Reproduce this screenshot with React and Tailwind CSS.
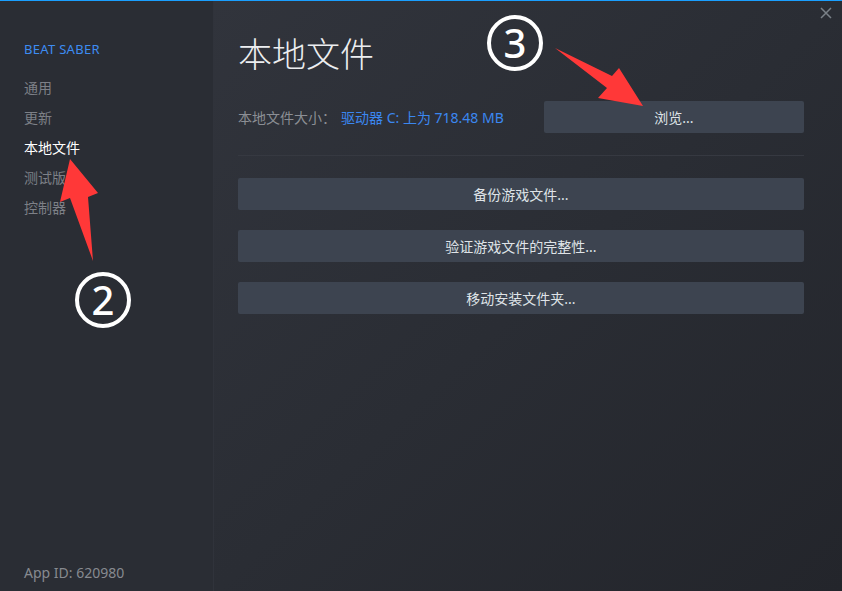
import React from "react";

const navItems = ["通用", "更新", "本地文件", "测试版", "控制器"];
const actions = ["备份游戏文件...", "验证游戏文件的完整性...", "移动安装文件夹..."];

function Circled({ n, className }) {
  return (
    <div
      className={`absolute w-[56px] h-[56px] rounded-full border-[4px] border-white flex items-center justify-center text-white text-[40px] font-medium leading-none ${className}`}
    >
      {n}
    </div>
  );
}

export default function App() {
  return (
    <div
      className="relative w-[842px] h-[591px] flex overflow-hidden border-t border-[#1a9fff] bg-[#2a2d34]"
      style={{ fontFamily: '"Noto Sans", "Noto Sans CJK SC", sans-serif' }}
    >
      {/* sidebar */}
      <div className="w-[214px] shrink-0 h-full flex flex-col bg-[#2a2d34] border-r border-[#30333b] pl-6">
        <div className="mt-[39px] text-[13px] text-[#3d8cf2] tracking-[0.3px]">BEAT SABER</div>
        <div className="mt-[13px] flex flex-col">
          {navItems.map((item) => (
            <div
              key={item}
              className={`h-[30px] leading-[30px] text-[14px] ${item === "本地文件" ? "text-white" : "text-[#7d8087]"}`}
            >
              {item}
            </div>
          ))}
        </div>
        <div className="mt-auto mb-[8px] text-[14px] text-[#878a90]">App ID: 620980</div>
      </div>

      {/* main */}
      <div className="flex-1 h-full bg-gradient-to-br from-[#31343c] via-[#2a2d34] to-[#23252b] px-6 pr-[38px]">
        <div className="mt-[29px] text-[34px] leading-[48px] text-[#eceef0] font-light">本地文件</div>
        <div className="mt-[23px] flex items-center h-[32px]">
          <div className="w-[306px] flex text-[14px]">
            <span className="text-[#8b8e94] w-[103px]">本地文件大小：</span>
            <span className="text-[#3b87f0]">驱动器 C: 上为 718.48 MB</span>
          </div>
          <button className="flex-1 h-[32px] rounded-[2px] bg-[#3d4450] text-[14px] text-[#dfe3e7]">浏览...</button>
        </div>
        <div className="mt-[22px] h-px bg-[#363941]"></div>
        <div className="mt-[22px] flex flex-col gap-[20px]">
          {actions.map((a) => (
            <button key={a} className="h-[32px] rounded-[2px] bg-[#3d4450] text-[14px] text-[#dfe3e7]">
              {a}
            </button>
          ))}
        </div>
      </div>

      {/* close */}
      <svg className="absolute right-[10px] top-[6px]" width="12" height="12" viewBox="0 0 12 12">
        <path d="M1 1L11 11M11 1L1 11" stroke="#7a8188" strokeWidth="1.5" />
      </svg>

      {/* annotations */}
      <svg className="absolute left-0 top-0 pointer-events-none" width="842" height="591">
        <polygon points="70,158 98,192 88,196 93,260 70,197 60,201" fill="#ff3838" />
        <polygon points="555,47 612,75 619,67 643,105 598,97 607,87" fill="#ff3838" />
      </svg>
      <Circled n="2" className="left-[75px] top-[271px]" />
      <Circled n="3" className="left-[487px] top-[14px]" />
    </div>
  );
}
